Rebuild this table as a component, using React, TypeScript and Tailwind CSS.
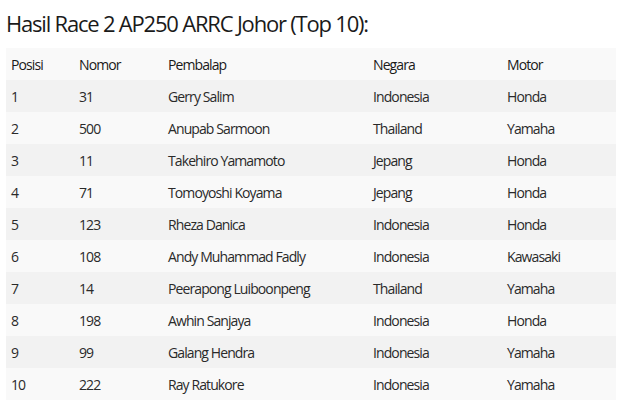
const rows = [
  ['1', '31', 'Gerry Salim', 'Indonesia', 'Honda'],
  ['2', '500', 'Anupab Sarmoon', 'Thailand', 'Yamaha'],
  ['3', '11', 'Takehiro Yamamoto', 'Jepang', 'Honda'],
  ['4', '71', 'Tomoyoshi Koyama', 'Jepang', 'Honda'],
  ['5', '123', 'Rheza Danica', 'Indonesia', 'Honda'],
  ['6', '108', 'Andy Muhammad Fadly', 'Indonesia', 'Kawasaki'],
  ['7', '14', 'Peerapong Luiboonpeng', 'Thailand', 'Yamaha'],
  ['8', '198', 'Awhin Sanjaya', 'Indonesia', 'Honda'],
  ['9', '99', 'Galang Hendra', 'Indonesia', 'Yamaha'],
  ['10', '222', 'Ray Ratukore', 'Indonesia', 'Yamaha'],
]

const cols = ['w-[68px]', 'w-[89px]', 'w-[205px]', 'w-[134px]', 'flex-1']

export default function App() {
  return (
    <div className="w-[620px] h-[413px] bg-white font-['Open_Sans',sans-serif] text-[#222] overflow-hidden">
      <h2 className="pl-[6px] pt-[8px] h-[48px] text-[22px] leading-[30px] tracking-[-1.2px] text-[#1a1a1a]">
        Hasil Race 2 AP250 ARRC Johor (Top 10):
      </h2>

      <div className="ml-[6px] w-[610px]">
        <div className="flex h-[32px] items-center bg-[#f9f9f9] text-[14px] tracking-[-0.9px] text-[#1a1a1a]">
          {['Posisi', 'Nomor', 'Pembalap', 'Negara', 'Motor'].map((h, i) => (
            <div key={h} className={`${cols[i]} pl-[5px]`}>{h}</div>
          ))}
        </div>
        {rows.map((r, ri) => (
          <div
            key={r[0]}
            className={`flex h-[32px] items-center text-[14px] tracking-[-0.9px] text-[#2a2a2a] ${
              ri % 2 === 0 ? 'bg-[#f2f2f2]' : 'bg-[#f9f9f9]'
            }`}
          >
            {r.map((c, i) => (
              <div key={i} className={`${cols[i]} pl-[5px]`}>{c}</div>
            ))}
          </div>
        ))}
      </div>
    </div>
  )
}
